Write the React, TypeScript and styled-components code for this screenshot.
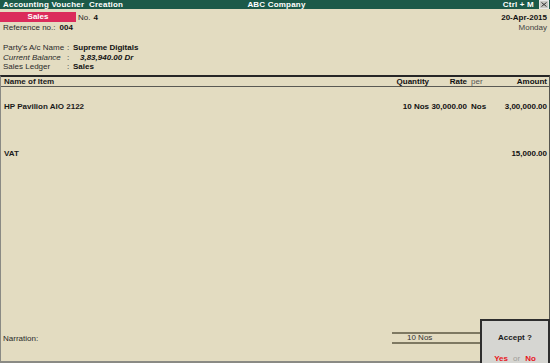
import styled, { createGlobalStyle } from 'styled-components';

const GlobalStyle = createGlobalStyle`
  html, body {
    margin: 0;
    padding: 0;
    background: #e3dcc1;
  }
  body {
    font-family: "Liberation Sans", Arial, sans-serif;
    font-size: 8px;
    color: #1a1a1a;
  }
`;

const Screen = styled.div`
  position: relative;
  width: 550px;
  height: 363px;
  display: flex;
  flex-direction: column;
  overflow: hidden;
  background: #e3dcc1;
`;

const TitleBar = styled.div`
  height: 9px;
  background: #1c5a49;
  color: #fff;
  font-weight: bold;
  font-size: 8px;
  line-height: 9px;
  letter-spacing: 0.2px;
  display: grid;
  grid-template-columns: 1fr auto 1fr;
  padding-left: 3px;
`;

const TitleRight = styled.div`
  display: flex;
  justify-content: flex-end;
  align-items: center;
  gap: 5px;
`;

const CloseBox = styled.span`
  width: 8px;
  height: 7px;
  background: #c9c9c4;
  border: 1px solid #e8e8e8;
  display: flex;
  align-items: center;
  justify-content: center;
  margin-right: 1px;
`;

const HeadRow = styled.div<{ $top?: number }>`
  display: flex;
  align-items: center;
  height: 10px;
  margin-top: ${(p) => p.$top ?? 0}px;
  padding-right: 3px;
`;

const VoucherType = styled.div`
  width: 76px;
  height: 10px;
  background: #db2b5b;
  color: #fff;
  font-weight: bold;
  text-align: center;
  line-height: 10px;
`;

const Plain = styled.span<{ $gap?: number; $color?: string }>`
  margin-left: ${(p) => p.$gap ?? 0}px;
  color: ${(p) => p.$color ?? '#2a2a2a'};
`;

const Strong = styled.span<{ $gap?: number; $italic?: boolean }>`
  margin-left: ${(p) => p.$gap ?? 0}px;
  font-weight: bold;
  color: #111;
  font-style: ${(p) => (p.$italic ? 'italic' : 'normal')};
`;

const Spacer = styled.div`
  flex: 1;
`;

const PartyBlock = styled.div`
  margin-top: 11px;
  display: grid;
  grid-template-columns: 64px 6px auto;
  grid-auto-rows: 9.5px;
  align-items: center;
  padding-left: 3px;
`;

const Label = styled.span<{ $italic?: boolean }>`
  color: #2a2a2a;
  font-style: ${(p) => (p.$italic ? 'italic' : 'normal')};
`;

const Colon = styled.span`
  color: #2a2a2a;
`;

const Table = styled.div`
  margin-top: 3px;
  flex: 1;
  display: flex;
  flex-direction: column;
  border-top: 2px solid #262626;
  border-left: 1px solid #8a8a84;
  border-right: 1px solid #55554f;
  border-bottom: 2px solid #8a8a84;
`;

const Cols = styled.div<{ $head?: boolean; $after?: number }>`
  display: grid;
  grid-template-columns: 1fr 60px 38px 23px 57px;
  align-items: center;
  height: ${(p) => (p.$head ? 9 : 10)}px;
  padding: 0 2px 0 2px;
  margin-bottom: ${(p) => p.$after ?? 0}px;
  font-weight: bold;
  border-bottom: ${(p) => (p.$head ? '1px solid #5a5a54' : 'none')};
`;

const Cell = styled.span<{ $align?: 'left' | 'right'; $muted?: boolean }>`
  text-align: ${(p) => p.$align ?? 'left'};
  white-space: nowrap;
  color: ${(p) => (p.$muted ? '#555' : '#111')};
  font-weight: ${(p) => (p.$muted ? 'normal' : 'bold')};
  padding-left: ${(p) => (p.$align === 'left' ? 4 : 0)}px;
`;

const NameCell = styled.span`
  padding-left: 1px;
  white-space: nowrap;
`;

const Items = styled.div`
  padding-top: 15px;
  flex: 1;
`;

const Footer = styled.div`
  display: flex;
  align-items: center;
  height: 12px;
  margin-bottom: 17px;
`;

const Narration = styled.span`
  width: 389px;
  padding-left: 2px;
  color: #2a2a2a;
`;

const TotalQty = styled.div`
  flex: 1;
  height: 8px;
  border-top: 2px solid #7e7962;
  border-bottom: 2px solid #7e7962;
  line-height: 8px;
  color: #333;
  padding-left: 15px;
`;

const AcceptBox = styled.div`
  position: absolute;
  right: 0;
  bottom: 0;
  width: 66px;
  height: 42px;
  background: #d6d6d2;
  border: 2px solid #2e2e2e;
  border-bottom: none;
  display: flex;
  flex-direction: column;
  align-items: center;
`;

const AcceptTitle = styled.div`
  margin-top: 12px;
  font-weight: bold;
  color: #1a1a1a;
`;

const Choices = styled.div`
  margin-top: 12px;
  display: flex;
  gap: 5px;
`;

const Choice = styled.span<{ $key?: boolean }>`
  color: ${(p) => (p.$key ? '#e8151b' : '#a09e98')};
  font-weight: ${(p) => (p.$key ? 'bold' : 'normal')};
`;

export default function App() {
  return (
    <Screen>
      <GlobalStyle />
      <TitleBar>
        <span>Accounting Voucher&nbsp; Creation</span>
        <span>ABC Company</span>
        <TitleRight>
          <span>Ctrl + M</span>
          <CloseBox>
            <svg width="6" height="5" viewBox="0 0 6 5">
              <path d="M0.5 0.5 L5.5 4.5 M5.5 0.5 L0.5 4.5" stroke="#333" strokeWidth="1" />
            </svg>
          </CloseBox>
        </TitleRight>
      </TitleBar>

      <HeadRow $top={3}>
        <VoucherType>Sales</VoucherType>
        <Plain $gap={2}>No.</Plain>
        <Strong $gap={3}>4</Strong>
        <Spacer />
        <Strong>20-Apr-2015</Strong>
      </HeadRow>
      <HeadRow>
        <Plain $gap={3}>Reference no.:</Plain>
        <Strong $gap={4}>004</Strong>
        <Spacer />
        <Plain $color="#444">Monday</Plain>
      </HeadRow>

      <PartyBlock>
        <Label>Party's A/c Name</Label>
        <Colon>:</Colon>
        <Strong>Supreme Digitals</Strong>
        <Label $italic>Current Balance</Label>
        <Colon>:</Colon>
        <Strong $gap={7} $italic>3,83,940.00 Dr</Strong>
        <Label>Sales Ledger</Label>
        <Colon>:</Colon>
        <Strong>Sales</Strong>
      </PartyBlock>

      <Table>
        <Cols $head>
          <NameCell>Name of Item</NameCell>
          <Cell $align="right">Quantity</Cell>
          <Cell $align="right">Rate</Cell>
          <Cell $align="left" $muted>per</Cell>
          <Cell $align="right">Amount</Cell>
        </Cols>
        <Items>
          <Cols $after={37}>
            <NameCell>HP Pavilion AIO 2122</NameCell>
            <Cell $align="right">10 Nos</Cell>
            <Cell $align="right">30,000.00</Cell>
            <Cell $align="left">Nos</Cell>
            <Cell $align="right">3,00,000.00</Cell>
          </Cols>
          <Cols>
            <NameCell>VAT</NameCell>
            <Cell />
            <Cell />
            <Cell />
            <Cell $align="right">15,000.00</Cell>
          </Cols>
        </Items>
        <Footer>
          <Narration>Narration:</Narration>
          <TotalQty>10 Nos</TotalQty>
        </Footer>
      </Table>

      <AcceptBox>
        <AcceptTitle>Accept ?</AcceptTitle>
        <Choices>
          <Choice $key>Yes</Choice>
          <Choice>or</Choice>
          <Choice $key>No</Choice>
        </Choices>
      </AcceptBox>
    </Screen>
  );
}
